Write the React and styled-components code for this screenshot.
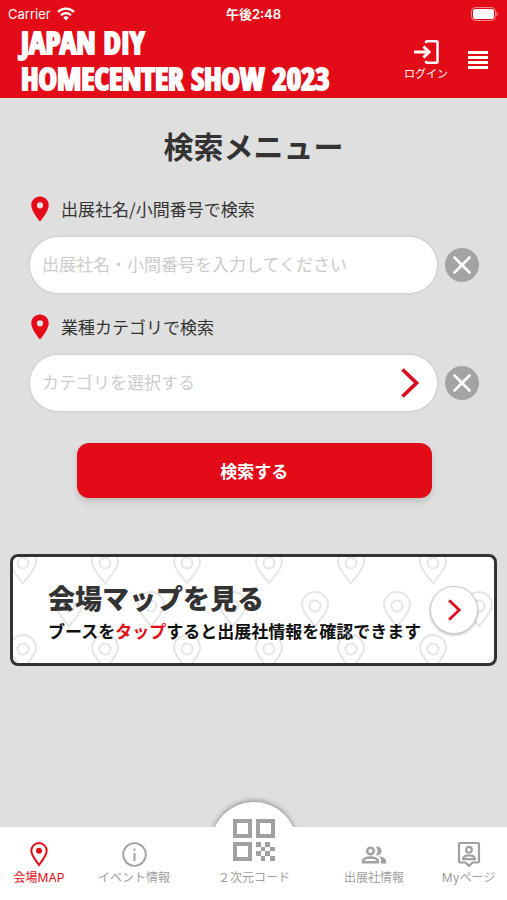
import React, { useState } from "react";
import styled, { createGlobalStyle } from "styled-components";
import { MdLocationOn } from "react-icons/md";

const GlobalStyle = createGlobalStyle`
  * {
    box-sizing: border-box;
  }

  body {
    margin: 0;
    background: #dfdfdf;
    color: #333;
    font-family: "Noto Sans CJK JP", sans-serif;
  }

  button, input, select {
    font-family: inherit;
  }
`;

const Page = styled.div`
  display: flex;
  flex-direction: column;
  min-height: 100vh;
`;

const Header = styled.header`
  background: #e30b17;
  color: white;
  padding-bottom: 2px;
`;

const StatusBar = styled.div`
  display: grid;
  grid-template-columns: 1fr auto 1fr;
  align-items: center;
  height: 24px;
  padding: 3px 8px 0;
  font-family: Inter, "Noto Sans CJK JP", sans-serif;
  font-size: 13px;
  line-height: 20px;

  .carrier {
    display: flex;
    align-items: center;
    gap: 6px;
  }

  .time {
    font-weight: 600;
  }

  .battery {
    justify-self: end;
  }

  svg {
    display: block;
  }
`;

const Brand = styled.div`
  display: flex;
  align-items: center;
  justify-content: space-between;
  padding: 0 19px 0 21px;
`;

const Logo = styled.h1`
  margin: 0;
  font-family: Impact, "Open Sans Condensed", "Roboto Condensed", sans-serif;
  font-size: 31px;
  font-weight: 900;
  line-height: 36px;
  white-space: nowrap;
  -webkit-text-stroke: 2px white;
`;

const HeaderActions = styled.div`
  display: flex;
  align-items: center;
  gap: 20px;
`;

const HeaderButton = styled.button`
  display: flex;
  flex-direction: column;
  align-items: center;
  padding: 0;
  border: none;
  background: none;
  color: white;
  font-size: 11px;
  line-height: 16px;
  white-space: nowrap;
  cursor: pointer;

  svg {
    display: block;
  }
`;

const Main = styled.main`
  flex: 1;
  padding: 24px 10px;
`;

const Heading = styled.h2`
  margin: 0 0 26px;
  font-size: 30px;
  font-weight: 700;
  line-height: 46px;
  text-align: center;
`;

const Form = styled.form`
  padding: 0 18px 0 20px;
`;

const Field = styled.div`
  margin-bottom: 19px;
`;

const Label = styled.label`
  display: flex;
  align-items: center;
  gap: 6px;
  margin-bottom: 13px;
  font-size: 17px;
  line-height: 24px;

  svg {
    flex: none;
    margin-left: -5px;
    color: #e30b17;
  }
`;

const FieldRow = styled.div`
  display: flex;
  align-items: center;
  gap: 8px;
`;

const Pill = styled.div`
  position: relative;
  flex: 1;
  border-radius: 28px;
  box-shadow: 0 0 3px rgba(0, 0, 0, 0.18);

  input,
  select {
    display: block;
    width: 100%;
    height: 56px;
    padding: 0 12px 4px;
    border: none;
    border-radius: 28px;
    outline: none;
    appearance: none;
    background: white;
    color: ${(props) => (props.$empty ? "#ccc" : "#333")};
    font-size: 17px;
  }

  input::placeholder {
    color: #ccc;
  }

  svg {
    position: absolute;
    top: 13px;
    right: 18px;
    pointer-events: none;
  }
`;

const ClearButton = styled.button`
  width: 34px;
  height: 34px;
  padding: 0;
  border: none;
  border-radius: 50%;
  background: #a3a3a3;
  cursor: pointer;

  svg {
    display: block;
  }
`;

const SubmitButton = styled.button`
  display: block;
  width: 79%;
  height: 55px;
  margin: 32px auto 56px 47px;
  border: none;
  border-radius: 12px;
  background: #e30b17;
  box-shadow: 0 4px 6px rgba(0, 0, 0, 0.14);
  color: white;
  font-size: 17px;
  font-weight: 700;
  cursor: pointer;
`;

const MapBanner = styled.a`
  position: relative;
  display: flex;
  align-items: center;
  justify-content: space-between;
  height: 112px;
  padding: 0 16px 0 35px;
  overflow: hidden;
  border: 3px solid #333;
  border-radius: 8px;
  background: white;
  color: #111;
  text-decoration: none;

  .pins {
    position: absolute;
    inset: 0;
    width: 100%;
    height: 100%;
  }
`;

const BannerText = styled.div`
  position: relative;
  padding-top: 4px;
  white-space: nowrap;

  h3 {
    margin: 0;
    color: #333;
    font-size: 27px;
    font-weight: 900;
    line-height: 38px;
  }

  p {
    margin: 0;
    font-size: 17px;
    font-weight: 700;
    line-height: 28px;
  }

  em {
    color: #e30b17;
    font-style: normal;
  }
`;

const BannerArrow = styled.span`
  position: relative;
  display: flex;
  flex: none;
  align-items: center;
  justify-content: center;
  width: 48px;
  height: 48px;
  border: 1px solid #ccc;
  border-radius: 50%;
  background: white;
  box-shadow: 0 1px 3px rgba(0, 0, 0, 0.3);
`;

const Nav = styled.nav`
  display: grid;
  grid-template-columns: 78fr 112fr 128fr 112fr 77fr;
  grid-template-rows: 73px;
  background: white;
  font-family: Inter, "Noto Sans CJK JP", sans-serif;
`;

const NavItem = styled.a`
  position: relative;
  display: flex;
  flex-direction: column;
  align-items: center;
  justify-content: flex-end;
  gap: 2px;
  padding-bottom: 13px;
  color: ${(props) => (props.$active ? "#e30b17" : "#a0a0a0")};
  font-size: 12px;
  line-height: 18px;
  text-decoration: none;
  white-space: nowrap;

  svg {
    display: block;
  }
`;

const CodeItem = styled(NavItem)`
  gap: 8px;

  svg,
  span {
    position: relative;
    flex: none;
  }

  /* round bump behind the icon, cut off at the bar's top edge */
  &::before {
    content: "";
    position: absolute;
    top: -25px;
    left: calc(50% - 43px);
    width: 86px;
    height: 86px;
    border-radius: 50%;
    background: white;
    box-shadow: 0 -2px 5px rgba(0, 0, 0, 0.3);
    clip-path: inset(-10px -10px 61px -10px);
  }
`;

const WifiIcon = () => (
  <svg width="18" height="14" viewBox="0 0 18 14" fill="none" stroke="white">
    <path d="M1 4.8a11.6 11.6 0 0 1 16 0" strokeWidth="2.3" />
    <path d="M4 8.1a7.2 7.2 0 0 1 10 0" strokeWidth="2.2" />
    <path d="M9 13.6 6.2 10.5a4.2 4.2 0 0 1 5.6 0z" fill="white" stroke="none" />
  </svg>
);

const BatteryIcon = () => (
  <svg className="battery" width="28" height="14" viewBox="0 0 28 14">
    <rect x="0.5" y="0.5" width="24" height="13" rx="4" fill="none" stroke="white" opacity="0.5" />
    <rect x="2" y="2" width="21" height="10" rx="2.5" fill="white" />
    <path d="M25.500 4.800c2 .8 2 3.600 0 4.400z" fill="white" opacity="0.5" />
  </svg>
);

const LoginIcon = () => (
  <svg width="26" height="26" viewBox="0 0 26 26" fill="none" stroke="white" strokeWidth="2.5">
    <path d="M13 4V3.300q0-1 1-1H23.500q1 0 1 1V22.700q0 1-1 1H14q-1 0-1-1V22" />
    <path d="M1 13h14" strokeWidth="3" />
    <path d="m10.500 7.500 5.500 5.500-5.500 5.500" strokeWidth="3" />
  </svg>
);

const MenuIcon = () => (
  <svg width="20" height="18" viewBox="0 0 20 18" fill="white">
    <path d="M0 0h20v3H0zM0 5h20v3H0zM0 10h20v3H0zM0 15h20v3H0z" />
  </svg>
);

const CloseIcon = () => (
  <svg width="34" height="34" viewBox="0 0 34 34" stroke="white" strokeWidth="2.7" strokeLinecap="round">
    <path d="m9.500 9.500 15 15m0-15-15 15" />
  </svg>
);

const Chevron = ({ width, height }) => (
  <svg width={width} height={height} viewBox="0 0 18 30" fill="none" stroke="#d90d20" strokeWidth="3.8">
    <path d="m1.500 1.500 14 13.500-14 13.500" />
  </svg>
);

const PinPattern = () => (
  <svg className="pins" aria-hidden="true">
    <defs>
      <g id="pin" fill="none" stroke="#e6e6e6" strokeWidth="2">
        <path d="M0 20C-5 14-13 6-13-1a13 13 0 0 1 26 0C13 6 5 14 0 20z" />
        <circle r="5.5" />
      </g>
      <pattern id="pins" width="82" height="86" patternUnits="userSpaceOnUse" patternTransform="translate(-31 -21)">
        <use href="#pin" x="41" y="27" />
        <use href="#pin" x="5" y="70" />
        <use href="#pin" x="87" y="70" />
        <use href="#pin" x="5" y="-16" />
        <use href="#pin" x="87" y="-16" />
      </pattern>
    </defs>
    <rect width="100%" height="100%" fill="url(#pins)" />
  </svg>
);

const MapIcon = () => (
  <svg width="18" height="25" viewBox="0 0 18 25">
    <path
      d="M9 23C6 18.500 1.300 13.500 1.300 8.800a7.700 7.700 0 0 1 15.400 0C16.700 13.500 12 18.500 9 23z"
      fill="none"
      stroke="currentColor"
      strokeWidth="2"
    />
    <circle cx="9" cy="8.8" r="3" fill="currentColor" />
  </svg>
);

const InfoIcon = () => (
  <svg width="25" height="25" viewBox="0 0 25 25" fill="none" stroke="currentColor">
    <circle cx="12.5" cy="12.5" r="11.3" strokeWidth="1.8" />
    <path d="M12.500 11v8M12.500 6.500v2.200" strokeWidth="2" />
  </svg>
);

const CodeIcon = () => (
  <svg width="42" height="42" viewBox="0 0 42 42" shapeRendering="crispEdges">
    <g fill="none" stroke="currentColor" strokeWidth="4">
      <path d="M2 2h15v15H2zM25 2h15v15H25zM2 25h15v15H2z" />
    </g>
    <path
      d="M23 23h5v5h-5zM32 23h5v5h-5zM28 28h4v4h-4zM37 28h5v4h-5zM23 32h5v5h-5zM32 32h5v5h-5zM28 37h4v5h-4zM37 37h5v5h-5z"
      fill="currentColor"
    />
  </svg>
);

const PeopleIcon = () => (
  <svg width="26" height="24" viewBox="0 0 26 24" fill="none" stroke="currentColor" strokeWidth="2.4">
    <circle cx="9.5" cy="8" r="3.3" />
    <path d="M2 19.300v-1.500c0-1.700 3.500-3.300 7.500-3.300s7.500 1.600 7.500 3.300v1.500z" />
    <path
      d="M15 3.700c3-.6 5.500 1.400 5.500 4.300s-2.500 4.900-5.500 4.300c2-2.500 2-6.100 0-8.600zM18 13.300c4 .6 7 2.300 7 4.700v2.500h-5v-2.500c0-1.900-.7-3.500-2-4.700z"
      fill="currentColor"
      stroke="none"
    />
  </svg>
);

const MyPageIcon = () => (
  <svg width="24" height="26" viewBox="0 0 24 26" fill="none" stroke="currentColor" strokeWidth="2.2">
    <path d="M3 2h18q1 0 1 1v17.500q0 1-1 1h-5.500L12 25l-3.500-3.500H3q-1 0-1-1V3q0-1 1-1z" />
    <circle cx="12" cy="8.7" r="2.8" />
    <path d="M6 18.200c0-2.500 3-3.900 6-3.900s6 1.400 6 3.900z" />
  </svg>
);

const App = () => {
  const [keyword, setKeyword] = useState("");
  const [category, setCategory] = useState("");

  return (
    <Page>
      <GlobalStyle />
      <Header>
        <StatusBar>
          <span className="carrier">
            Carrier <WifiIcon />
          </span>
          <span className="time">午後2:48</span>
          <BatteryIcon />
        </StatusBar>
        <Brand>
          <Logo>
            JAPAN DIY
            <br />
            HOMECENTER SHOW 2023
          </Logo>
          <HeaderActions>
            <HeaderButton type="button">
              <LoginIcon />
              ログイン
            </HeaderButton>
            <HeaderButton type="button" aria-label="メニュー">
              <MenuIcon />
            </HeaderButton>
          </HeaderActions>
        </Brand>
      </Header>

      <Main>
        <Heading>検索メニュー</Heading>
        <Form onSubmit={(e) => e.preventDefault()}>
          <Field>
            <Label htmlFor="keyword">
              <MdLocationOn size={30} />
              出展社名/小間番号で検索
            </Label>
            <FieldRow>
              <Pill>
                <input
                  id="keyword"
                  type="text"
                  placeholder="出展社名・小間番号を入力してください"
                  value={keyword}
                  onChange={(e) => setKeyword(e.target.value)}
                />
              </Pill>
              <ClearButton type="button" aria-label="クリア" onClick={() => setKeyword("")}>
                <CloseIcon />
              </ClearButton>
            </FieldRow>
          </Field>
          <Field>
            <Label htmlFor="category">
              <MdLocationOn size={30} />
              業種カテゴリで検索
            </Label>
            <FieldRow>
              <Pill $empty={!category}>
                <select
                  id="category"
                  value={category}
                  onChange={(e) => setCategory(e.target.value)}
                >
                  <option value="">カテゴリを選択する</option>
                </select>
                <Chevron width={18} height={30} />
              </Pill>
              <ClearButton type="button" aria-label="クリア" onClick={() => setCategory("")}>
                <CloseIcon />
              </ClearButton>
            </FieldRow>
          </Field>
          <SubmitButton type="submit">検索する</SubmitButton>
        </Form>

        <MapBanner href="#map">
          <PinPattern />
          <BannerText>
            <h3>会場マップを見る</h3>
            <p>
              ブースを<em>タップ</em>すると出展社情報を確認できます
            </p>
          </BannerText>
          <BannerArrow>
            <Chevron width={13} height={22} />
          </BannerArrow>
        </MapBanner>
      </Main>

      <Nav>
        <NavItem href="#map" $active>
          <MapIcon />
          会場MAP
        </NavItem>
        <NavItem href="#event">
          <InfoIcon />
          イベント情報
        </NavItem>
        <CodeItem href="#code">
          <CodeIcon />
          <span>２次元コード</span>
        </CodeItem>
        <NavItem href="#exhibitors">
          <PeopleIcon />
          出展社情報
        </NavItem>
        <NavItem href="#mypage">
          <MyPageIcon />
          Myページ
        </NavItem>
      </Nav>
    </Page>
  );
};

export default App;
